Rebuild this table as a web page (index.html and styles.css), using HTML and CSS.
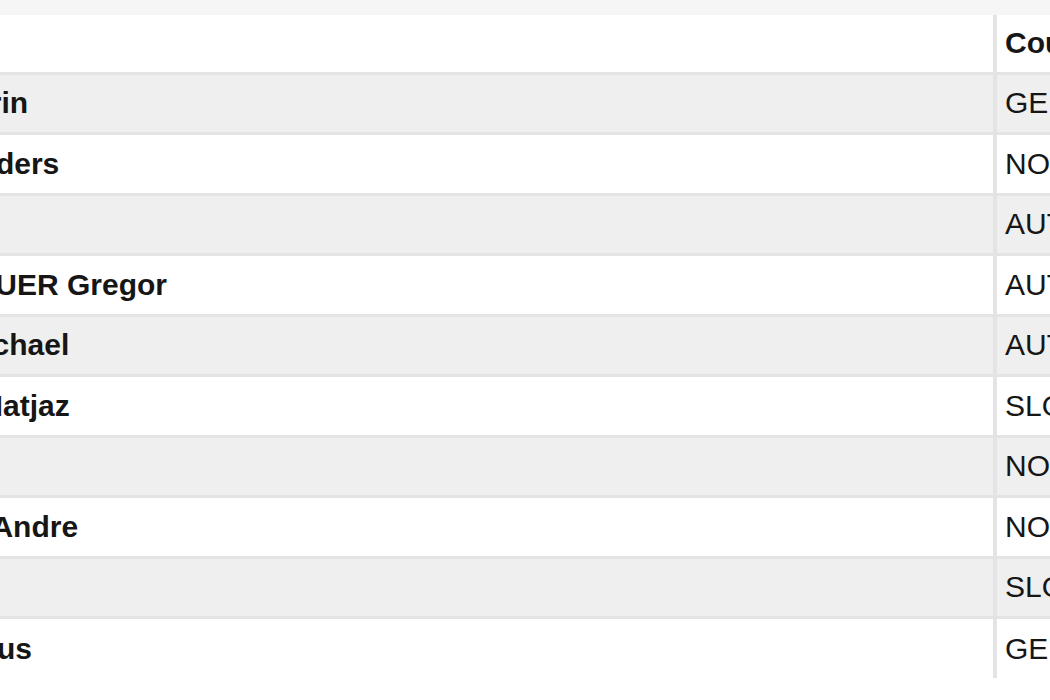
FILE: index.html
```html
<!DOCTYPE html>
<html lang="en">
<head>
<meta charset="utf-8">
<title>Results</title>
<link rel="stylesheet" href="styles.css">
</head>
<body>
<div class="topbar"></div>
<div class="viewport">
  <table class="results">
    <colgroup>
      <col class="col-name">
      <col class="col-country">
    </colgroup>
    <thead>
      <tr><th class="name">Name</th><th class="country">Country</th></tr>
    </thead>
    <tbody>
      <tr><td class="name">FREITAG Severin</td><td class="country">GER</td></tr>
      <tr><td class="name">JACOBSEN Anders</td><td class="country">NOR</td></tr>
      <tr><td class="name">KOCH Martin</td><td class="country">AUT</td></tr>
      <tr><td class="name">SCHLIERENZAUER Gregor</td><td class="country">AUT</td></tr>
      <tr><td class="name">HAYBOECK Michael</td><td class="country">AUT</td></tr>
      <tr><td class="name">PUNGERTAR Matjaz</td><td class="country">SLO</td></tr>
      <tr><td class="name">VELTA Rune</td><td class="country">NOR</td></tr>
      <tr><td class="name">TANDE Daniel-Andre</td><td class="country">NOR</td></tr>
      <tr><td class="name">PREVC Peter</td><td class="country">SLO</td></tr>
      <tr><td class="name">KRAUSS Marinus</td><td class="country">GER</td></tr>
    </tbody>
  </table>
</div>
</body>
</html>
```
FILE: styles.css
```css
html, body {
  margin: 0;
  padding: 0;
  background: #ffffff;
}
body {
  font-family: "Liberation Sans", Arial, sans-serif;
  color: #161616;
  width: 1050px;
  height: 700px;
  overflow: hidden;
}
.topbar {
  height: 15px;
  background: #f6f6f6;
}
.viewport {
  width: 1050px;
  overflow: hidden;
}
.results {
  margin-left: -226px;
  border-collapse: collapse;
  table-layout: fixed;
  width: 1420px;
  font-size: 30px;
}
.col-name { width: 1221px; }
.col-country { width: 199px; }
.results th,
.results td {
  height: 58px;
  padding: 0 0 0 8px;
  text-align: left;
  vertical-align: middle;
  white-space: nowrap;
  border-bottom: 3px solid #e4e4e4;
  box-sizing: border-box;
}
.results th {
  font-weight: bold;
  background: #ffffff;
}
.results td.name {
  font-weight: bold;
}
.results td.country {
  font-weight: normal;
}
.results .name {
  border-right: 4px solid #e4e4e4;
}
.results tbody tr {
  height: 60.5px;
}
.results tbody tr:nth-child(odd) td {
  background: #efefef;
}
.results tbody tr:last-child td {
  border-bottom: none;
}
```
